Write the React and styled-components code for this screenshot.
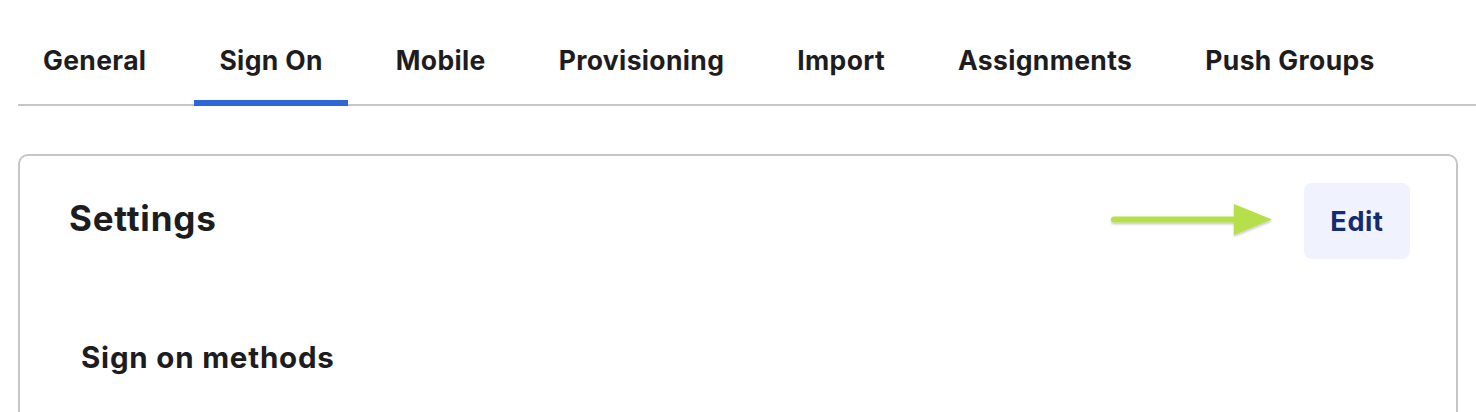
import React from "react";
import styled, { createGlobalStyle } from "styled-components";

const GlobalStyle = createGlobalStyle`
  html, body {
    margin: 0;
    padding: 0;
    background: #ffffff;
  }
  body {
    font-family: Inter, "Noto Sans", "Liberation Sans", sans-serif;
    color: #1d1d21;
    -webkit-font-smoothing: antialiased;
  }
`;

const Page = styled.div`
  padding-left: 18px;
  overflow: hidden;
`;

const TabBar = styled.nav`
  display: flex;
  gap: 23px;
  border-bottom: 2px solid #c4c4c9;
`;

const Tab = styled.a`
  position: relative;
  padding: 44px 25px 28px;
  font-size: 26.5px;
  line-height: 32px;
  font-weight: 700;
  letter-spacing: 0.35px;
  color: #1d1d21;
  text-decoration: none;
  white-space: nowrap;
  cursor: pointer;

  &::after {
    content: "";
    position: absolute;
    left: 0;
    right: 0;
    bottom: -2px;
    height: 6px;
    background: ${(p) => (p.$active ? "#2c66d9" : "transparent")};
  }
`;

const Card = styled.section`
  margin: 48px 18px 0 0;
  border: 2px solid #c4c4c9;
  border-bottom: none;
  border-radius: 10px 10px 0 0;
  height: 260px;
  box-sizing: border-box;
`;

const CardHeader = styled.header`
  position: relative;
  display: flex;
  align-items: center;
  justify-content: space-between;
  padding: 27px 46px 0 49px;
`;

const Title = styled.h2`
  margin: 0;
  font-size: 35px;
  line-height: 40px;
  font-weight: 700;
  letter-spacing: 0.8px;
  color: #1d1d21;
  transform: translateY(-3px);
`;

const EditButton = styled.button`
  width: 106px;
  height: 76px;
  border: none;
  border-radius: 8px;
  background: #f0f3fd;
  color: #142b6f;
  font-family: inherit;
  font-size: 27px;
  font-weight: 700;
  letter-spacing: 0.7px;
  cursor: pointer;
`;

const Pointer = styled.svg`
  position: absolute;
  left: 1091px;
  top: 44px;
  width: 166px;
  height: 40px;
  overflow: visible;
`;

const Section = styled.div`
  padding: 80px 0 0 61px;
`;

const SectionTitle = styled.h3`
  margin: 0;
  font-size: 29.5px;
  line-height: 36px;
  font-weight: 700;
  letter-spacing: 0.8px;
  color: #1d1d21;
`;

const tabs = [
  "General",
  "Sign On",
  "Mobile",
  "Provisioning",
  "Import",
  "Assignments",
  "Push Groups",
];

export default function App() {
  return (
    <>
      <GlobalStyle />
      <Page>
        <TabBar>
          {tabs.map((t) => (
            <Tab key={t} $active={t === "Sign On"}>
              {t}
            </Tab>
          ))}
        </TabBar>
        <Card>
          <CardHeader>
            <Title>Settings</Title>
            {/* callout arrow pointing at the edit action */}
            <Pointer viewBox="0 0 166 40">
              <defs>
                <filter id="arrowShadow" x="-10%" y="-50%" width="120%" height="200%">
                  <feDropShadow dx="0" dy="1.5" stdDeviation="1.2" floodColor="#000" floodOpacity="0.25" />
                </filter>
              </defs>
              <g filter="url(#arrowShadow)" fill="#b6e049">
                <rect x="0" y="16.5" width="126" height="6" rx="3" />
                <path d="M123 4 L161 19.5 L123 35 Z" strokeLinejoin="round" />
              </g>
            </Pointer>
            <EditButton>Edit</EditButton>
          </CardHeader>
          <Section>
            <SectionTitle>Sign on methods</SectionTitle>
          </Section>
        </Card>
      </Page>
    </>
  );
}
